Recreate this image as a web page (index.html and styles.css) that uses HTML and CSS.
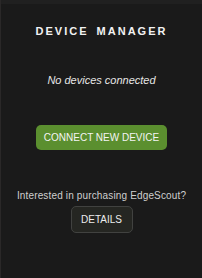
FILE: index.html
```html
<!doctype html>
<html lang="en">
<head>
  <meta charset="utf-8">
  <meta name="viewport" content="width=device-width, initial-scale=1">
  <title>Device Manager</title>
  <link rel="stylesheet" href="styles.css">
</head>
<body>
  <div class="topbar"></div>
  <main class="panel">
    <h1>Device Manager</h1>
    <p class="empty">No devices connected</p>
    <button class="connect">Connect new device</button>
    <p class="promo">Interested in purchasing EdgeScout?</p>
    <button class="details">Details</button>
  </main>
</body>
</html>
```

FILE: styles.css
```css
html, body {
  margin: 0;
  height: 100%;
}
body {
  background-color: #1a1a1a;
  color: #eee;
  font-family: "Liberation Sans", Arial, sans-serif;
  border-left: 1px solid #2a2828;
  box-sizing: border-box;
}
.topbar {
  height: 4px;
  background-color: #202020;
}
.panel {
  display: flex;
  flex-direction: column;
  align-items: center;
}
h1 {
  margin: 21px 0 0;
  font-size: 11px;
  font-weight: bold;
  letter-spacing: 2px;
  text-transform: uppercase;
  word-spacing: 3px;
  color: #f2f2f2;
}
.empty {
  margin: 37px 0 0;
  font-size: 11px;
  font-style: italic;
  color: #e6e6e6;
}
button {
  font-family: "Liberation Sans", Arial, sans-serif;
  text-transform: uppercase;
  cursor: pointer;
}
.connect {
  margin-top: 39px;
  width: 131px;
  height: 25px;
  background-color: #5b8f2f;
  border: 0;
  border-radius: 5px;
  color: #f4f4f4;
  font-size: 10px;
  padding: 0;
}
.promo {
  margin: 40px 0 0;
  font-size: 10px;
  letter-spacing: 0.15px;
  color: #cfcfcf;
}
.details {
  margin-top: 5px;
  width: 62px;
  height: 27px;
  background-color: #252622;
  border: 1px solid #414240;
  border-radius: 5px;
  color: #ececec;
  font-size: 10px;
  padding: 0;
}
```
